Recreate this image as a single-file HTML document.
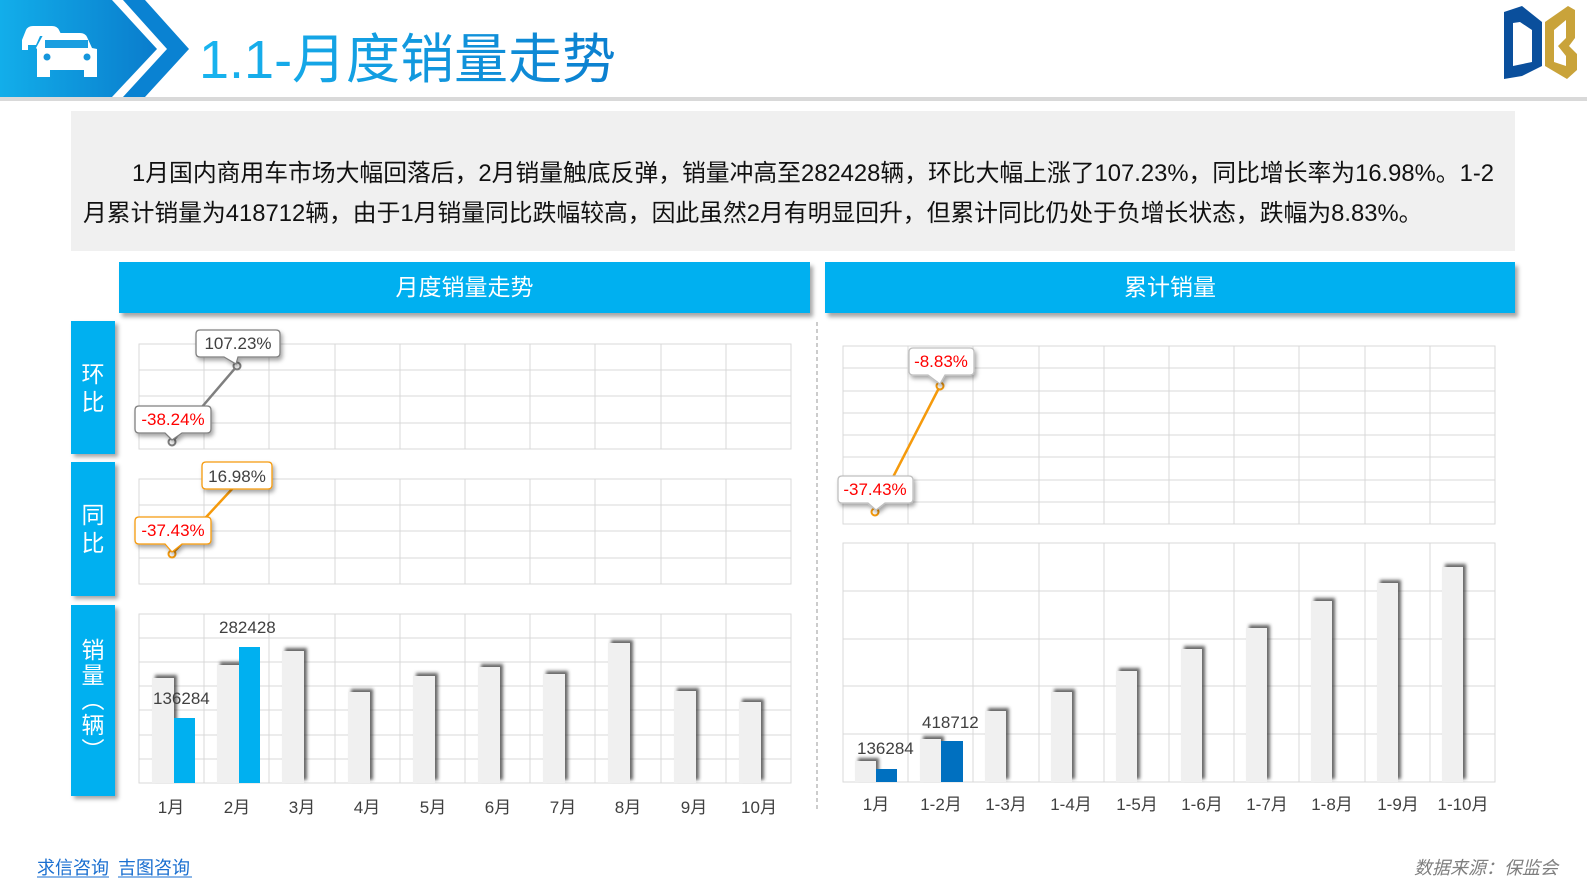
<!DOCTYPE html>
<html><head><meta charset="utf-8"><style>
html,body{margin:0;padding:0;background:#fff;}
body{width:1587px;height:892px;position:relative;overflow:hidden;font-family:"Liberation Sans","Noto Sans CJK SC",sans-serif;}
.abs{position:absolute;}
.title{left:199px;top:27px;font-size:54px;line-height:66px;color:#0c9be2;
background:linear-gradient(90deg,#18b4ef,#0b7fcf);-webkit-background-clip:text;background-clip:text;-webkit-text-fill-color:transparent;}
.txt{left:71px;top:111px;width:1444px;height:140px;background:#f0f0f0;}
.txt p{margin:0;position:absolute;font-size:23.8px;color:#111;white-space:nowrap;}
.hd{top:262px;height:51px;background:#00b0f0;color:#fff;font-size:23px;text-align:center;line-height:51px;box-shadow:3px 4px 4px rgba(0,0,0,.35);}
.side{left:71px;width:44px;background:#00b0f0;color:#fff;font-size:23px;box-shadow:3px 3px 4px rgba(0,0,0,.35);display:flex;align-items:center;justify-content:center;text-align:center;line-height:28px;}
</style></head><body>
<svg class="abs" style="left:0;top:0" width="1587" height="892" viewBox="0 0 1587 892" font-family="Liberation Sans, Noto Sans CJK SC, sans-serif">
<defs>
<linearGradient id="bg1" x1="0" x2="1" y1="0" y2="0"><stop offset="0" stop-color="#12aeea"/><stop offset="1" stop-color="#0a7ccc"/></linearGradient>
<filter id="sh" x="-50%" y="-10%" width="200%" height="120%"><feDropShadow dx="3" dy="-3" stdDeviation="1.5" flood-color="#333" flood-opacity="0.75"/></filter>
<filter id="bs" x="-20%" y="-20%" width="150%" height="160%"><feDropShadow dx="2" dy="3" stdDeviation="2" flood-color="#000" flood-opacity="0.35"/></filter>
</defs>
<rect x="0" y="97" width="1587" height="4" fill="#d9d9d9"/>
<polygon points="0,0 112,0 157,49 112,97 0,97" fill="url(#bg1)"/>
<polygon points="123,0 145,0 189,49 145,97 123,97 167,49" fill="#0a82d2"/>
<g fill="#fff">
<path d="M22,40 L26,30 Q28,26 33,26 L52,26 Q57,26 59,30 L62,36 L40,36 L36,45 L28,45 L28,50 L22,50 Z"/>
<path d="M36,48 L42,37 Q44,33 49,33 L80,33 Q85,33 87,37 L92,48 L97,49 L97,77 L84,77 L84,70 L50,70 L50,77 L37,77 L37,49 Z" />
</g>
<rect x="45" y="40" width="43" height="8" fill="#1a9ee0"/>
<circle cx="47" cy="57" r="3.5" fill="#1596dc"/><circle cx="87" cy="57" r="3.5" fill="#1596dc"/>
<path d="M1504,12 L1522,6 L1542,22 L1542,66 L1522,76 L1504,79 Z M1513,23 L1513,66 L1532,62 L1532,30 L1520,22 Z" fill="#0a4f9c" fill-rule="evenodd"/>
<path d="M1545,22 L1568,6 L1575,10 L1575,38 L1569,46 L1577,54 L1577,70 L1567,79 L1545,66 Z M1554,30 L1554,62 L1566,66 L1566,56 L1558,46 L1566,38 L1566,20 Z" fill="#c9a33a" fill-rule="evenodd"/>
<line x1="817" y1="322" x2="817" y2="810" stroke="#999" stroke-dasharray="4,3"/>
<g stroke="#d9d9d9" stroke-width="1" fill="none">
<rect x="139" y="344" width="652" height="105" fill="#fff"/>
<path d="M139,370H791M139,396H791M139,423H791"/>
<rect x="139" y="479" width="652" height="105" fill="#fff"/>
<path d="M139,505H791M139,531H791M139,558H791"/>
<rect x="139" y="614" width="652" height="169" fill="#fff"/>
<path d="M139,638H791M139,662H791M139,686H791M139,710H791M139,735H791M139,759H791"/>
<path d="M204,344V449M269,344V449M335,344V449M400,344V449M465,344V449M530,344V449M595,344V449M661,344V449M726,344V449"/>
<path d="M204,479V584M269,479V584M335,479V584M400,479V584M465,479V584M530,479V584M595,479V584M661,479V584M726,479V584"/>
<path d="M204,614V783M269,614V783M335,614V783M400,614V783M465,614V783M530,614V783M595,614V783M661,614V783M726,614V783"/>
</g>
<g fill="#f0f0f0" filter="url(#sh)">
<rect x="152" y="678" width="22" height="105"/>
<rect x="217" y="665" width="22" height="118"/>
<rect x="282" y="651" width="22" height="132"/>
<rect x="348" y="692" width="22" height="91"/>
<rect x="413" y="676" width="22" height="107"/>
<rect x="478" y="667" width="22" height="116"/>
<rect x="543" y="674" width="22" height="109"/>
<rect x="608" y="643" width="22" height="140"/>
<rect x="674" y="691" width="22" height="92"/>
<rect x="739" y="702" width="22" height="81"/>
</g>
<rect x="174" y="718" width="21" height="65" fill="#00b0f0"/>
<rect x="239" y="647" width="21" height="136" fill="#00b0f0"/>
<g font-size="17" fill="#404040">
<text x="153" y="704">136284</text><text x="219" y="633">282428</text>
</g>
<g font-size="17" fill="#404040" text-anchor="middle">
<text x="171" y="813">1月</text><text x="237" y="813">2月</text><text x="302" y="813">3月</text><text x="367" y="813">4月</text><text x="433" y="813">5月</text><text x="498" y="813">6月</text><text x="563" y="813">7月</text><text x="628" y="813">8月</text><text x="694" y="813">9月</text><text x="759" y="813">10月</text>
</g>
<line x1="172" y1="442" x2="237" y2="366" stroke="#7f7f7f" stroke-width="2.5"/>
<circle cx="172" cy="442" r="3.5" fill="#fff" stroke="#7f7f7f" stroke-width="2"/>
<circle cx="237" cy="366" r="3.5" fill="#fff" stroke="#7f7f7f" stroke-width="2"/>
<g filter="url(#bs)">
<path d="M200,330 H276 Q280,330 280,334 V353 Q280,357 276,357 H238 L236,364 L224,357 H200 Q196,357 196,353 V334 Q196,330 200,330Z" fill="#fff" stroke="#7f7f7f" stroke-width="1.3"/>
<path d="M139,406 H207 Q211,406 211,410 V429 Q211,433 207,433 H182 L172,440 L165,433 H139 Q135,433 135,429 V410 Q135,406 139,406Z" fill="#fff" stroke="#7f7f7f" stroke-width="1.3"/>
</g>
<text x="238" y="349" font-size="17" fill="#404040" text-anchor="middle">107.23%</text>
<text x="173" y="425" font-size="17" fill="#ff0000" text-anchor="middle">-38.24%</text>
<line x1="172" y1="554" x2="233" y2="488" stroke="#f59a0c" stroke-width="2.5"/>
<circle cx="172" cy="554" r="3.5" fill="#fff" stroke="#f59a0c" stroke-width="2"/>
<g filter="url(#bs)">
<path d="M206,462 H268 Q272,462 272,466 V485 Q272,489 268,489 H206 Q202,489 202,485 V466 Q202,462 206,462Z" fill="#fff" stroke="#f59a0c" stroke-width="1.3"/>
<path d="M139,517 H207 Q211,517 211,521 V540 Q211,544 207,544 H182 L172,552 L165,544 H139 Q135,544 135,540 V521 Q135,517 139,517Z" fill="#fff" stroke="#f59a0c" stroke-width="1.3"/>
</g>
<text x="237" y="482" font-size="17" fill="#404040" text-anchor="middle">16.98%</text>
<text x="173" y="536" font-size="17" fill="#ff0000" text-anchor="middle">-37.43%</text>
<g stroke="#d9d9d9" stroke-width="1" fill="none">
<rect x="843" y="346" width="652" height="178" fill="#fff"/>
<path d="M843,368H1495M843,391H1495M843,413H1495M843,435H1495M843,457H1495M843,480H1495M843,502H1495"/>
<rect x="843" y="543" width="652" height="239" fill="#fff"/>
<path d="M843,591H1495M843,639H1495M843,686H1495M843,734H1495"/>
<path d="M908,346V524M973,346V524M1039,346V524M1104,346V524M1169,346V524M1234,346V524M1299,346V524M1365,346V524M1430,346V524"/>
<path d="M908,543V782M973,543V782M1039,543V782M1104,543V782M1169,543V782M1234,543V782M1299,543V782M1365,543V782M1430,543V782"/>
</g>
<g fill="#f0f0f0" filter="url(#sh)">
<rect x="855" y="761" width="21" height="21"/>
<rect x="920" y="739" width="21" height="43"/>
<rect x="985" y="711" width="21" height="71"/>
<rect x="1051" y="692" width="21" height="90"/>
<rect x="1116" y="671" width="21" height="111"/>
<rect x="1181" y="649" width="21" height="133"/>
<rect x="1246" y="628" width="21" height="154"/>
<rect x="1311" y="601" width="21" height="181"/>
<rect x="1377" y="583" width="21" height="199"/>
<rect x="1442" y="567" width="21" height="215"/>
</g>
<rect x="876" y="769" width="21" height="13" fill="#0070c0"/>
<rect x="941" y="741" width="22" height="41" fill="#0070c0"/>
<g font-size="17" fill="#404040">
<text x="857" y="754">136284</text><text x="922" y="728">418712</text>
</g>
<g font-size="17" fill="#404040" text-anchor="middle">
<text x="876" y="810">1月</text><text x="941" y="810">1-2月</text><text x="1006" y="810">1-3月</text><text x="1071" y="810">1-4月</text><text x="1137" y="810">1-5月</text><text x="1202" y="810">1-6月</text><text x="1267" y="810">1-7月</text><text x="1332" y="810">1-8月</text><text x="1398" y="810">1-9月</text><text x="1463" y="810">1-10月</text>
</g>
<line x1="875" y1="512" x2="940" y2="386" stroke="#f59a0c" stroke-width="2.5"/>
<circle cx="875" cy="512" r="3.5" fill="#fff" stroke="#f59a0c" stroke-width="2"/>
<circle cx="940" cy="386" r="3.5" fill="#fff" stroke="#f59a0c" stroke-width="2"/>
<g filter="url(#bs)">
<path d="M913,348 H970 Q974,348 974,352 V371 Q974,375 970,375 H945 L940,384 L928,375 H913 Q909,375 909,371 V352 Q909,348 913,348Z" fill="#fff" stroke="#bfbfbf" stroke-width="1.3"/>
<path d="M842,476 H909 Q913,476 913,480 V499 Q913,503 909,503 H885 L876,510 L868,503 H842 Q838,503 838,499 V480 Q838,476 842,476Z" fill="#fff" stroke="#bfbfbf" stroke-width="1.3"/>
</g>
<text x="941" y="367" font-size="17" fill="#ff0000" text-anchor="middle">-8.83%</text>
<text x="875" y="495" font-size="17" fill="#ff0000" text-anchor="middle">-37.43%</text>
<text x="37" y="874" font-size="18" fill="#1a6fd0">求信咨询</text>
<text x="118" y="874" font-size="18" fill="#1a6fd0">吉图咨询</text>
<line x1="37" y1="877" x2="109" y2="877" stroke="#1a6fd0"/>
<line x1="118" y1="877" x2="192" y2="877" stroke="#1a6fd0"/>
<text x="1558" y="874" font-size="18" fill="#7f7f7f" text-anchor="end" font-style="italic">数据来源：保监会</text>
</svg>
<div class="abs title">1.1-月度销量走势</div>
<div class="abs txt">
<p style="left:61px;top:42px;">1月国内商用车市场大幅回落后，2月销量触底反弹，销量冲高至282428辆，环比大幅上涨了107.23%，同比增长率为16.98%。1-2</p>
<p style="left:12px;top:82px;">月累计销量为418712辆，由于1月销量同比跌幅较高，因此虽然2月有明显回升，但累计同比仍处于负增长状态，跌幅为8.83%。</p>
</div>
<div class="abs hd" style="left:119px;width:691px;">月度销量走势</div>
<div class="abs hd" style="left:825px;width:690px;">累计销量</div>
<div class="abs side" style="top:321px;height:133px;">环<br>比</div>
<div class="abs side" style="top:462px;height:134px;">同<br>比</div>
<div class="abs side" style="top:605px;height:191px;line-height:25px;">销<br>量<br>︵<br>辆<br>︶</div>
</body></html>
